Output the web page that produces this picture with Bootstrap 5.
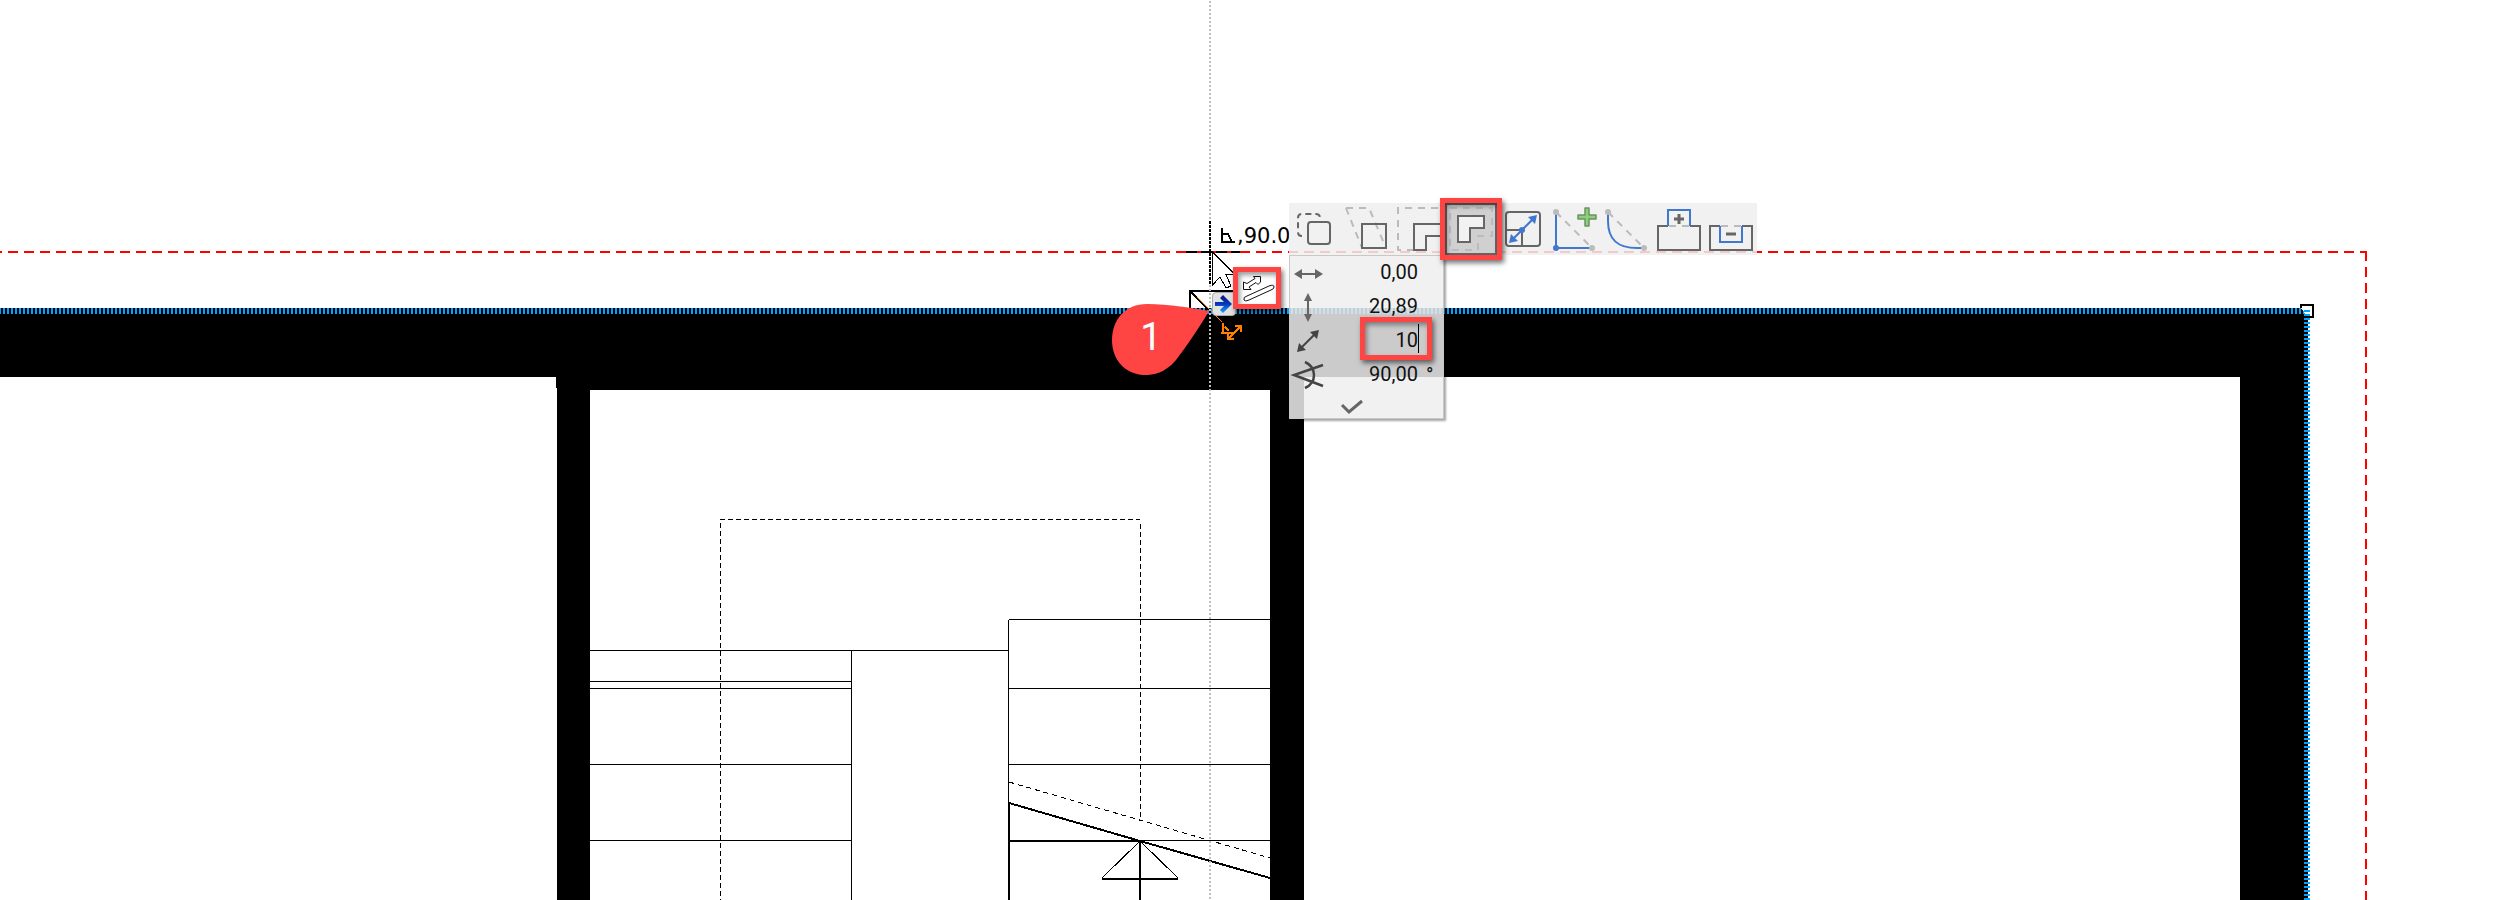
<!DOCTYPE html>
<html lang="en">
<head>
<meta charset="utf-8">
<meta name="viewport" content="width=device-width, initial-scale=1">
<title>Floor plan editor</title>
<link href="https://cdn.jsdelivr.net/npm/bootstrap@5.3.0/dist/css/bootstrap.min.css" rel="stylesheet">
<script src="https://cdn.jsdelivr.net/npm/bootstrap@5.3.0/dist/js/bootstrap.bundle.min.js" defer></script>
<style>
  :root { --ink: #666; --mark: #ff4444; --veil: rgba(238, 238, 238, .85); }
  body { font-family: Roboto, "Liberation Sans", sans-serif; }
  .plan-text { font: 21px "DejaVu Sans", sans-serif; }
  .pin { position: absolute; }
  .callout-box { border: 5px solid var(--mark); box-shadow: 2px 3px 5px rgba(0,0,0,.55), inset 2px 3px 5px rgba(0,0,0,.4); pointer-events: none; }
  .pet-palette { left: 1289px; top: 203px; }
  .tool-strip { background: var(--veil); }
  .tool-btn { width: 52px; height: 52px; padding: 0; border: 0; background: none; }
  .tool-btn svg, .value-row svg, .ok-btn svg { display: block; fill: none; stroke: var(--ink); stroke-width: 2; }
  .tool-btn.active { background: #d0d0d0; position: relative; }
  .tool-btn .callout-box { left: -5px; top: -5px; width: 62px; height: 62px; }
  .tool-btn .faint { stroke: #bbb; stroke-dasharray: 7 6; }
  .tool-btn .blue { stroke: #4078d0; }
  .tool-btn .knob { fill: #bbb; stroke: none; }
  .tool-btn .blue-fill { fill: #4078d0; stroke: none; }
  .tracker { width: 155px; background: var(--veil); border: 1px solid #c8c8c8; box-shadow: 2px 2px 2px rgba(0,0,0,.35); }
  .value-row { height: 34px; position: relative; }
  .value-row svg { width: 38px; height: 34px; }
  .value-row.dark svg { stroke: #444; }
  .value-row .head { fill: currentColor; stroke: none; }
  .value-row { color: var(--ink); }
  .value-row.dark { color: #444; }
  .value-row input { width: 90px; height: 34px; padding: 0 0 2px; border: 0; background: none; outline: 0; text-align: right; font-size: 20px; color: #111; }
  .value-row .unit { margin-left: 8px; font-size: 20px; color: #111; }
  .value-row .callout-box { left: 70px; top: -7px; width: 72px; height: 43px; }
  .caret-bar { left: 128px; top: 0; width: 1px; height: 29px; background: #000; }
  .ok-btn { height: 26px; padding: 0; border: 0; background: none; }
  .step-pin { left: 1111px; top: 303px; width: 99px; height: 73px; }
  .step-pin svg { position: absolute; inset: 0; }
  .step-pin span { position: relative; width: 80px; line-height: 69px; font-size: 38px; color: #fff; text-align: center; }
  .offset-box { left: 1233px; top: 267px; width: 48px; height: 42px; background: #fff; }
  .go-btn { left: 1212px; top: 292px; width: 24px; height: 24px; padding: 0; border: 1px solid #aaa; border-radius: 4px; background: #e2e2e2; }
  .go-btn svg { display: block; }
</style>
</head>
<body class="bg-white">
<main class="position-relative vh-100 overflow-hidden">
  <svg class="d-block w-100 h-100" shape-rendering="crispEdges" fill="none" stroke="#000" role="img" aria-label="Floor plan">
    <defs>
      <pattern id="hatchH" width="4" height="6" x="3" y="308" patternUnits="userSpaceOnUse"><rect width="4" height="6" fill="#000" stroke="none"/><rect width="2" height="6" fill="#00a2ff" stroke="none"/></pattern>
      <pattern id="hatchV" width="6" height="4" x="2304" y="310" patternUnits="userSpaceOnUse"><rect width="6" height="2" fill="#00a2ff" stroke="none"/></pattern>
    </defs>
    <!-- walls -->
    <path d="M0 308H2308V1600H2240V377H1304V1600H1270V390H590V1600H557V388H556V377H0z" fill="#000" stroke="none"/>
    <rect x="0" y="308" width="2305" height="6" fill="url(#hatchH)" stroke="none"/>
    <path d="M2301 308V305H2313V317H2308" stroke-width="2" fill="#fff"/>
    <rect x="2304" y="310" width="6" height="1290" fill="url(#hatchV)" stroke="none"/>
    <!-- roof outline -->
    <path d="M-8 252H2367" stroke="#f00" stroke-width="2" stroke-dasharray="10 6"/>
    <path d="M2366 251V1600" stroke="#f00" stroke-width="2" stroke-dasharray="10 6"/>
    <!-- left flight -->
    <path d="M590 650.500H1008M590 681.500H851M590 688.500H851M590 764.500H851M590 840.500H851M851.500 650V1600"/>
    <!-- right flight -->
    <path d="M1009 619.500H1270M1008 688.500H1270M1008 764.500H1270M1140 840.500H1270M1008.500 620V803"/>
    <path d="M1009 1600V803L1140 841L1270 878M1009 841H1140V1600M1102 879H1178" stroke-width="2"/>
    <path d="M1102 878L1140 841L1178 878"/>
    <path d="M720 519.500H1140" stroke-dasharray="5 3"/>
    <path d="M720.500 523V1600M1140.500 524V820" stroke-dasharray="5 3"/>
    <path d="M1009 782L1270 858" stroke-dasharray="5 4"/>
    <!-- insertion point handle -->
    <path d="M1190 308V291H1234V308z" fill="#fff" stroke="none"/>
    <path d="M1190 308V291H1234M1190 291L1209 310" stroke-width="2"/>
    <path d="M1197 297L1222 322" stroke="#ff8000"/>
    <!-- guide line through the cursor -->
    <path d="M1210 1V1600" stroke="#bfbfbf" stroke-width="2" stroke-dasharray="2 2"/>
    <path d="M1210 221V285" stroke-width="2" stroke-dasharray="3 1"/>
    <path d="M1186 252H1240" stroke-width="2" stroke-dasharray="11 4"/>
    <g stroke="#ff8000">
      <path d="M1222.500 323V332M1221 333H1234M1225 327L1229 331M1229 338L1240 327M1235 326H1241V332M1228 333V339H1234" stroke-width="2"/>
    </g>
    <path d="M1212.500 252L1235 274.500H1226L1231 286L1226 288L1220 277L1212.500 285z" fill="#fff"/>
    <path d="M1222 228V242H1235M1222 234H1228L1232 242" stroke-width="2"/>
    <text class="plan-text" x="1237" y="243" fill="#000" stroke="none">,90.0</text>
  </svg>

  <button class="pin go-btn" type="button" aria-label="Continue">
    <svg width="22" height="22" viewBox="0 0 22 22"><defs><linearGradient id="goBlue" x2="0" y2="1"><stop stop-color="#001a80"/><stop offset=".5" stop-color="#0738b8"/><stop offset="1" stop-color="#18a8ff"/></linearGradient></defs><path d="M2 9H11L7 5L10 2L19 11L10 20L7 17L11 13H2z" fill="url(#goBlue)"/></svg>
  </button>

  <div class="pin callout-box offset-box">
    <svg class="d-block" width="38" height="32" fill="none" stroke="#111" stroke-width="1"><path d="M6 28Q5 25 9 24L31 14Q36 12 36 15Q36 17 33 18L11 28Q7 30 6 28z"/><path d="M5.500 10V17.500H13L11 15L18 10.500L20 12.500L22.500 10V4.500H15.500L17 6.500L9 11.500z"/></svg>
  </div>

  <div class="pin step-pin d-flex">
    <svg width="99" height="73"><path d="M98 8C88 25 75 44 65 57C54 70 43 72 33 72C13 71 1 56 1 37C1 17 14 1 36 1C58 1 82 5 98 8z" fill="#ff4444"/></svg>
    <span>1</span>
  </div>

  <section class="pin pet-palette d-flex flex-column align-items-start" aria-label="Edit palette">
    <div class="tool-strip d-flex" role="toolbar" aria-label="Edit tools">
      <button class="tool-btn" type="button" aria-label="Move"><svg viewBox="0 0 52 52"><path d="M13 33Q9 33 9 29V15Q9 11 13 11H27Q31 11 31 15V18" stroke-dasharray="6 4"/><rect x="19" y="19" width="22" height="22" rx="3"/></svg></button>
      <button class="tool-btn" type="button" aria-label="Shear"><svg viewBox="0 0 52 52"><path class="faint" d="M5 5H28L45 45M5 5L21 45"/><rect x="21" y="21" width="24" height="24"/></svg></button>
      <button class="tool-btn" type="button" aria-label="Move edge"><svg viewBox="0 0 52 52"><path class="faint" d="M21 47H5V5H52"/><path d="M52 21H21V47H33V33H52"/></svg></button>
      <button class="tool-btn active" type="button" aria-label="Offset all edges" aria-pressed="true"><svg viewBox="0 0 52 52"><path class="faint" d="M5 5H47V33H33V47H5z"/><path d="M13 13H39V25H25V39H13z" fill="#f2f2f2"/><rect x="1" y="1" width="50" height="50"/></svg><span class="pin callout-box"></span></button>
      <button class="tool-btn" type="button" aria-label="Resize"><svg viewBox="0 0 52 52"><rect x="9" y="9" width="34" height="34" rx="3"/><path d="M9 27H25V43"/><path class="blue" d="M14 38L38 14"/><path class="blue-fill" d="M12 40L14 31L21 38zM40 12L38 21L31 14z"/><circle class="blue-fill" cx="25" cy="27" r="3"/></svg></button>
      <button class="tool-btn" type="button" aria-label="Add node"><svg viewBox="0 0 52 52"><path class="faint" d="M7 9L43 45"/><path class="blue" d="M7 9V45H43"/><circle class="knob" cx="7" cy="9" r="3"/><circle class="knob" cx="43" cy="45" r="3"/><circle class="blue-fill" cx="7" cy="45" r="3"/><path d="M36 5H40V12H47V16H40V23H36V16H29V12H36z" fill="#8fce7e" stroke="#6a9460" stroke-width="1.500" stroke-linejoin="round"/></svg></button>
      <button class="tool-btn" type="button" aria-label="Curve edge"><svg viewBox="0 0 52 52"><path class="faint" d="M7 9L43 45"/><path class="blue" d="M7 9V18C7 37 17 45 36 45H43"/><circle class="knob" cx="7" cy="9" r="3"/><circle class="knob" cx="43" cy="45" r="3"/></svg></button>
      <button class="tool-btn" type="button" aria-label="Add to shape"><svg viewBox="0 0 52 52"><path class="faint" d="M16 23H36"/><path d="M15 23H5V47H47V23H37"/><path class="blue" d="M15 23V7H37V23"/><path d="M21 16H31M26 11V21" stroke-width="3"/></svg></button>
      <button class="tool-btn" type="button" aria-label="Subtract from shape"><svg viewBox="0 0 52 52"><path class="faint" d="M16 23H36"/><path d="M15 23H5V47H47V23H37"/><path class="blue" d="M15 23V39H37V23"/><path d="M21 31H31" stroke-width="3"/></svg></button>
    </div>

    <form class="tracker d-flex flex-column">
      <div class="value-row d-flex align-items-center">
        <svg><path d="M8 18H29"/><path class="head" d="M4 18L12 13V23zM33 18L25 13V23z"/></svg>
        <input type="text" value="0,00" aria-label="Horizontal distance">
      </div>
      <div class="value-row d-flex align-items-center">
        <svg><path d="M18 8V27"/><path class="head" d="M18 3L22 11H14zM18 32L22 24H14z"/></svg>
        <input type="text" value="20,89" aria-label="Vertical distance">
      </div>
      <div class="value-row dark d-flex align-items-center">
        <svg><path d="M10 25L26 9"/><path class="head" d="M7 28L9 19L16 26zM29 6L27 15L20 8z"/></svg>
        <input type="text" value="10" aria-label="Distance">
        <span class="pin callout-box"></span><span class="pin caret-bar"></span>
      </div>
      <div class="value-row dark d-flex align-items-center">
        <svg><path d="M33 7L4 17L33 28M15 4Q24 8 24 17Q24 26 15 30" stroke-width="2.500"/></svg>
        <input type="text" value="90,00" aria-label="Angle"><span class="unit">°</span>
      </div>
      <button class="ok-btn" type="button" aria-label="Confirm"><svg width="120" height="26"><path d="M52 13L59 20L72 9" stroke-width="3"/></svg></button>
    </form>
  </section>
</main>
</body>
</html>
